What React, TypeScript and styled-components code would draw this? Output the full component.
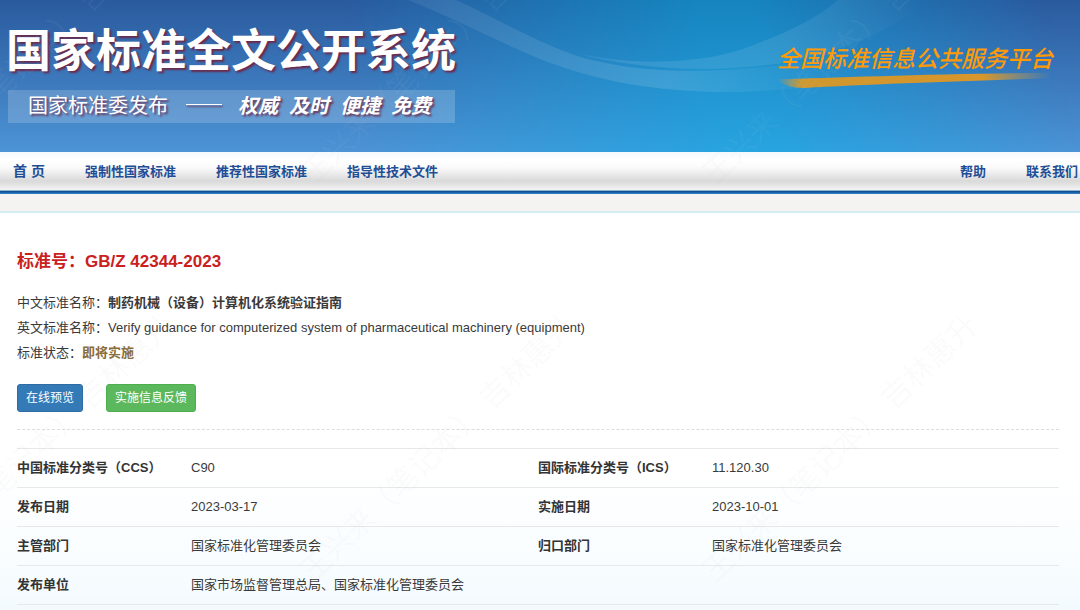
import React from 'react';
import styled, { createGlobalStyle } from 'styled-components';

const GlobalStyle = createGlobalStyle`
  *, *::before, *::after { box-sizing: border-box; }
  body {
    margin: 0;
    background: #fff;
    color: #3a3a3a;
    font-family: "Liberation Sans", "Noto Sans CJK SC", sans-serif;
    font-size: 13px;
    line-height: 25px;
  }
`;

const Page = styled.div`
  position: relative;
  display: flex;
  flex-direction: column;
  min-height: 100vh;
  overflow: hidden;
`;

const Banner = styled.header`
  position: relative;
  display: flex;
  justify-content: space-between;
  height: 152px;
  padding: 17px 27px 0 6px;
  background: linear-gradient(#2a5a9e, #4c94d6);
`;

const BannerArt = styled.svg`
  position: absolute;
  inset: 0;
  width: 100%;
  height: 100%;
`;

const Brand = styled.div`
  position: relative;
  color: #fff;
  font-family: "Noto Sans CJK SC", sans-serif;
`;

const SiteName = styled.h1`
  margin: 0;
  font-size: 45px;
  font-weight: 700;
  line-height: 62px;
  white-space: nowrap;
  text-shadow: 2px 2px 2px #6b2a4d;
`;

const Slogan = styled.p`
  display: flex;
  align-items: center;
  gap: 14px;
  width: 447px;
  height: 33px;
  margin: 11px 0 0 2px;
  padding: 0 0 4px 20px;
  background: rgba(255, 255, 255, 0.18);
  font-size: 20px;
  font-weight: 400;
  line-height: 28px;
  white-space: nowrap;
  text-shadow: 2px 2px 2px #6b3a5d;
`;

const SloganRule = styled.span`
  width: 36px;
  height: 1px;
  margin: 0 2px 0 4px;
  background: #fff;
  box-shadow: 1px 2px 2px #6b3a5d;
`;

const SloganWords = styled.span`
  display: flex;
  gap: 11px;
  font-size: 20px;
  font-style: italic;
  font-weight: 700;
`;

const Platform = styled.a`
  position: relative;
  padding-top: 24px;
  color: #ff9a05;
  font-family: "Noto Sans CJK SC", sans-serif;
  font-size: 23px;
  font-style: italic;
  font-weight: 500;
  line-height: 32px;
  text-decoration: none;
  white-space: nowrap;
`;

const BrushStroke = styled.svg`
  display: block;
  width: 276px;
  height: 20px;
`;

const Nav = styled.nav`
  display: flex;
  justify-content: space-between;
  height: 38px;
  padding: 0 2px 0 13px;
  background: linear-gradient(#f5f9fd, #fff 22%, #fbfbfb 40%, #dadada 76%, #e2e2e2 85%, #f4f4f4);
`;

const NavGroup = styled.div`
  display: flex;
  gap: 40px;
`;

const NavLink = styled.a<{ $home?: boolean }>`
  color: #1f4e96;
  font-size: ${(p) => (p.$home ? 14 : 13)}px;
  font-weight: 700;
  line-height: 39px;
  text-decoration: none;
  white-space: nowrap;
`;

const NavEdge = styled.div`
  height: 4px;
  background: linear-gradient(#8fb4d6 0 1px, #10508f 1px 2px, #1a62a8 2px 3px, #2f7dc0 3px);
`;

const Strip = styled.div`
  height: 19px;
  border-bottom: 2px solid #d6ecf5;
  background: #f4f3f1;
`;

const Content = styled.main`
  flex: 1;
  padding: 36px 21px 5px 17px;
  background: linear-gradient(#fff 260px, #f9fdff 340px, #f3fafe 400px);
`;

const StandardNumber = styled.h2`
  margin: 0 0 15px;
  color: #c9211e;
  font-size: 17px;
  font-weight: 700;
  line-height: 26px;
`;

const Line = styled.p`
  margin: 0;
`;

const Status = styled.strong`
  color: #8a6d3b;
`;

const Actions = styled.div`
  display: flex;
  gap: 23px;
  margin-top: 19px;
  padding-bottom: 17px;
  border-bottom: 1px dashed #ddd;
`;

const Button = styled.button<{ $tone: 'blue' | 'green' }>`
  height: 28px;
  padding: 0 8px;
  border: 1px solid ${(p) => (p.$tone === 'blue' ? '#2e6da4' : '#4cae4c')};
  border-radius: 3px;
  background: ${(p) => (p.$tone === 'blue' ? '#337ab7' : '#5cb85c')};
  color: #fff;
  font: inherit;
  font-size: 12px;
  line-height: 18px;
  cursor: pointer;
`;

const Details = styled.table`
  width: 100%;
  margin-top: 18px;
  border-collapse: collapse;
  border-bottom: 1px solid #e6e9eb;
  table-layout: fixed;
`;

const Row = styled.tr`
  height: 39px;
  border-top: 1px solid #e6e8e9;
`;

const Term = styled.th`
  width: 16.7%;
  padding: 0 0 2px;
  color: #333;
  font-weight: 700;
  text-align: left;
  white-space: nowrap;
`;

const Value = styled.td`
  padding: 0 0 2px;
`;

const WatermarkLayer = styled.div`
  position: absolute;
  inset: 0;
  overflow: hidden;
  pointer-events: none;
`;

const Watermark = styled.span<{ $x: number; $y: number; $onBanner: boolean }>`
  position: absolute;
  left: ${(p) => p.$x}px;
  top: ${(p) => p.$y}px;
  color: ${(p) => (p.$onBanner ? 'rgba(190, 200, 210, 0.08)' : 'rgba(150, 150, 150, 0.05)')};
  font-size: 30px;
  line-height: 32px;
  white-space: nowrap;
  transform: rotate(-44deg);
  transform-origin: left center;
`;

const records = [
  [['中国标准分类号（CCS）', 'C90'], ['国际标准分类号（ICS）', '11.120.30']],
  [['发布日期', '2023-03-17'], ['实施日期', '2023-10-01']],
  [['主管部门', '国家标准化管理委员会'], ['归口部门', '国家标准化管理委员会']],
  [['发布单位', '国家市场监督管理总局、国家标准化管理委员会']],
];

const marks = [-96, 306, 708].flatMap((x) => [163, 560].map((y) => ({ x, y })));

export default function App() {
  return (
    <>
      <GlobalStyle />
      <Page>
        <Banner>
          <BannerArt viewBox="0 0 1080 152" preserveAspectRatio="none" aria-hidden="true">
            <defs>
              <linearGradient id="glow" x1="0" y1="0" x2="0" y2="1">
                <stop offset="0" stopColor="#1684bf" />
                <stop offset="1" stopColor="#28a4e0" />
              </linearGradient>
              <linearGradient id="spread" gradientUnits="userSpaceOnUse" x1="360" y1="100" x2="1040" y2="-40">
                <stop offset="0" stopColor="#fff" stopOpacity="0" />
                <stop offset="0.5" stopColor="#fff" stopOpacity="1" />
                <stop offset="0.58" stopColor="#fff" stopOpacity="1" />
                <stop offset="1" stopColor="#fff" stopOpacity="0" />
              </linearGradient>
              <mask id="fade">
                <rect width="1080" height="152" fill="url(#spread)" />
              </mask>
              <linearGradient id="ribbon" x1="0" y1="0" x2="1" y2="0">
                <stop offset="0" stopColor="#fff" stopOpacity="0.07" />
                <stop offset="0.5" stopColor="#fff" stopOpacity="0.12" />
                <stop offset="0.85" stopColor="#fff" stopOpacity="0" />
              </linearGradient>
              <linearGradient id="ribbonRight" x1="0" y1="0" x2="1" y2="0">
                <stop offset="0" stopColor="#fff" stopOpacity="0.1" />
                <stop offset="0.6" stopColor="#fff" stopOpacity="0.09" />
                <stop offset="1" stopColor="#fff" stopOpacity="0" />
              </linearGradient>
            </defs>
            <rect width="1080" height="152" fill="url(#glow)" mask="url(#fade)" />
            <path
              d="M408 0H456C500 20 535 42 580 57C640 74 715 75 800 62C850 54 890 40 925 20L925 62C850 84 780 93 715 92C640 90 590 78 540 59C490 38 450 16 408 0Z"
              fill="url(#ribbon)"
            />
            <path
              d="M575 53C620 64 690 66 740 50C785 34 815 20 838 0H925C900 28 840 52 790 62C715 74 640 70 575 53Z"
              fill="url(#ribbonRight)"
            />
          </BannerArt>
          <Brand>
            <SiteName>国家标准全文公开系统</SiteName>
            <Slogan>
              <span>国家标准委发布</span>
              <SloganRule />
              <SloganWords>
                <span>权威</span>
                <span>及时</span>
                <span>便捷</span>
                <span>免费</span>
              </SloganWords>
            </Slogan>
          </Brand>
          <Platform href="#platform">
            全国标准信息公共服务平台
            <BrushStroke viewBox="0 0 276 20" aria-hidden="true">
              <defs>
                <linearGradient id="brush" x1="0" y1="0" x2="1" y2="0">
                  <stop offset="0" stopColor="#d8982c" stopOpacity="0" />
                  <stop offset="0.09" stopColor="#cf982f" />
                  <stop offset="0.75" stopColor="#d8962b" />
                  <stop offset="1" stopColor="#c89a4a" stopOpacity="0" />
                </linearGradient>
              </defs>
              <path d="M0 6C60 5 160 0 274 0V5C200 8 90 11 28 15C14 15 6 12 0 6Z" fill="url(#brush)" />
            </BrushStroke>
          </Platform>
        </Banner>
        <Nav>
          <NavGroup>
            <NavLink $home href="#home">首 页</NavLink>
            <NavLink href="#mandatory">强制性国家标准</NavLink>
            <NavLink href="#recommended">推荐性国家标准</NavLink>
            <NavLink href="#guidance">指导性技术文件</NavLink>
          </NavGroup>
          <NavGroup>
            <NavLink href="#help">帮助</NavLink>
            <NavLink href="#contact">联系我们</NavLink>
          </NavGroup>
        </Nav>
        <NavEdge />
        <Strip />
        <Content>
          <StandardNumber>标准号：GB/Z 42344-2023</StandardNumber>
          <Line>中文标准名称：<strong>制药机械（设备）计算机化系统验证指南</strong></Line>
          <Line>英文标准名称：Verify guidance for computerized system of pharmaceutical machinery (equipment)</Line>
          <Line>标准状态：<Status>即将实施</Status></Line>
          <Actions>
            <Button type="button" $tone="blue">在线预览</Button>
            <Button type="button" $tone="green">实施信息反馈</Button>
          </Actions>
          <Details>
            <tbody>
              {records.map((pairs) => (
                <Row key={pairs[0][0]}>
                  {pairs.map(([term, value]) => (
                    <React.Fragment key={term}>
                      <Term scope="row">{term}</Term>
                      <Value colSpan={pairs.length === 1 ? 3 : 1}>{value}</Value>
                    </React.Fragment>
                  ))}
                </Row>
              ))}
            </tbody>
          </Details>
        </Content>
        <WatermarkLayer aria-hidden="true">
          {marks.map(({ x, y }) => (
            <Watermark key={`${x}-${y}`} $x={x} $y={y} $onBanner={y < 200}>王兴来（笔记本） 吉林惠升</Watermark>
          ))}
        </WatermarkLayer>
      </Page>
    </>
  );
}
